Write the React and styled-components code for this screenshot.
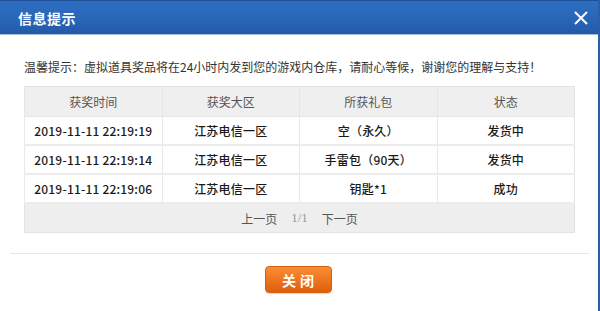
import React from 'react'
import styled, { createGlobalStyle } from 'styled-components'

const GlobalStyle = createGlobalStyle`
  html, body {
    margin: 0;
    padding: 0;
    background: #fff;
  }
  body {
    font-family: "Noto Sans CJK SC", "Noto Sans", sans-serif;
  }
`

const Dialog = styled.div`
  width: 600px;
  height: 311px;
  box-sizing: border-box;
  background: #fff;
  border-right: 2px solid #2a5ea9;
  display: flex;
  flex-direction: column;
`

const Header = styled.div`
  height: 35px;
  box-sizing: border-box;
  flex-shrink: 0;
  display: flex;
  align-items: center;
  justify-content: space-between;
  padding: 0 9px 0 18px;
  background: linear-gradient(to bottom, #2d6ec2 0%, #2a66b8 50%, #2459a8 100%);
  border-top: 1px solid #1f4f96;
  border-bottom: 1px solid #a9bcd6;
`

const Title = styled.h1`
  margin: 0;
  font-size: 14px;
  font-weight: bold;
  color: #fff;
  letter-spacing: 0.5px;
`

const CloseIcon = styled.button`
  border: 0;
  padding: 0;
  background: none;
  width: 16px;
  height: 16px;
  display: flex;
  cursor: pointer;
`

const Body = styled.div`
  padding: 23px 23px 0 24px;
`

const Tip = styled.p`
  margin: 0 0 10px;
  font-size: 12px;
  line-height: 18px;
  color: #333;
`

const RecordTable = styled.table`
  width: 551px;
  border-collapse: collapse;
  table-layout: fixed;
  border: 1px solid #e2e2e2;
  font-size: 12px;
`

const Th = styled.th`
  height: 29px;
  padding: 0;
  font-weight: normal;
  color: #555;
  background: #efefef;
  border-left: 1px solid #e6e6e6;
  border-bottom: 1px solid #e6e6e6;
  text-align: center;
`

const Td = styled.td`
  height: 27px;
  padding: 0;
  color: #1a1a1a;
  font-weight: 500;
  letter-spacing: 0.2px;
  text-align: center;
  border-left: 1px solid #e8e8e8;
  border-bottom: 2px solid #ececec;
`

const PagerCell = styled.td`
  height: 28px;
  padding: 0;
  background: #eeeeee;
  text-align: center;
  color: #555;
`

const Pager = styled.div`
  display: flex;
  justify-content: center;
  align-items: center;
  gap: 14px;
`

const PageLink = styled.a`
  color: #555;
  text-decoration: none;
  cursor: pointer;
`

const PageNum = styled.span`
  font-family: "Liberation Serif", serif;
  font-size: 13px;
  color: #999;
`

const Divider = styled.hr`
  margin: 20px 9px 0 10px;
  border: 0;
  border-top: 1px solid #e6e6e6;
`

const Footer = styled.div`
  display: flex;
  justify-content: center;
  padding-top: 12px;
  padding-right: 2px;
`

const CloseButton = styled.button`
  width: 67px;
  height: 27px;
  border: 1px solid #d3600f;
  border-radius: 4px;
  background: linear-gradient(to bottom, #f98e34 0%, #ef7620 50%, #de5f0c 100%);
  box-shadow: 0 1px 1px rgba(0, 0, 0, 0.15);
  color: #fff;
  font-family: "Noto Sans CJK SC", sans-serif;
  font-size: 14px;
  font-weight: bold;
  letter-spacing: 4px;
  padding: 0 0 0 4px;
  cursor: pointer;
`

const records = [
  { time: '2019-11-11 22:19:19', zone: '江苏电信一区', gift: '空（永久）', status: '发货中' },
  { time: '2019-11-11 22:19:14', zone: '江苏电信一区', gift: '手雷包（90天）', status: '发货中' },
  { time: '2019-11-11 22:19:06', zone: '江苏电信一区', gift: '钥匙*1', status: '成功' },
]

export default function App() {
  return (
    <>
      <GlobalStyle />
      <Dialog>
        <Header>
          <Title>信息提示</Title>
          <CloseIcon aria-label="关闭">
            <svg width="16" height="16" viewBox="0 0 16 16">
              <path d="M2 2 L14 14 M14 2 L2 14" stroke="#fff" strokeWidth="2" fill="none" />
            </svg>
          </CloseIcon>
        </Header>
        <Body>
          <Tip>温馨提示：虚拟道具奖品将在24小时内发到您的游戏内仓库，请耐心等候，谢谢您的理解与支持！</Tip>
          <RecordTable>
            <thead>
              <tr>
                <Th>获奖时间</Th>
                <Th>获奖大区</Th>
                <Th>所获礼包</Th>
                <Th>状态</Th>
              </tr>
            </thead>
            <tbody>
              {records.map((r) => (
                <tr key={r.time}>
                  <Td>{r.time}</Td>
                  <Td>{r.zone}</Td>
                  <Td>{r.gift}</Td>
                  <Td>{r.status}</Td>
                </tr>
              ))}
              <tr>
                <PagerCell colSpan={4}>
                  <Pager>
                    <PageLink>上一页</PageLink>
                    <PageNum>1/1</PageNum>
                    <PageLink>下一页</PageLink>
                  </Pager>
                </PagerCell>
              </tr>
            </tbody>
          </RecordTable>
        </Body>
        <Divider />
        <Footer>
          <CloseButton>关闭</CloseButton>
        </Footer>
      </Dialog>
    </>
  )
}
